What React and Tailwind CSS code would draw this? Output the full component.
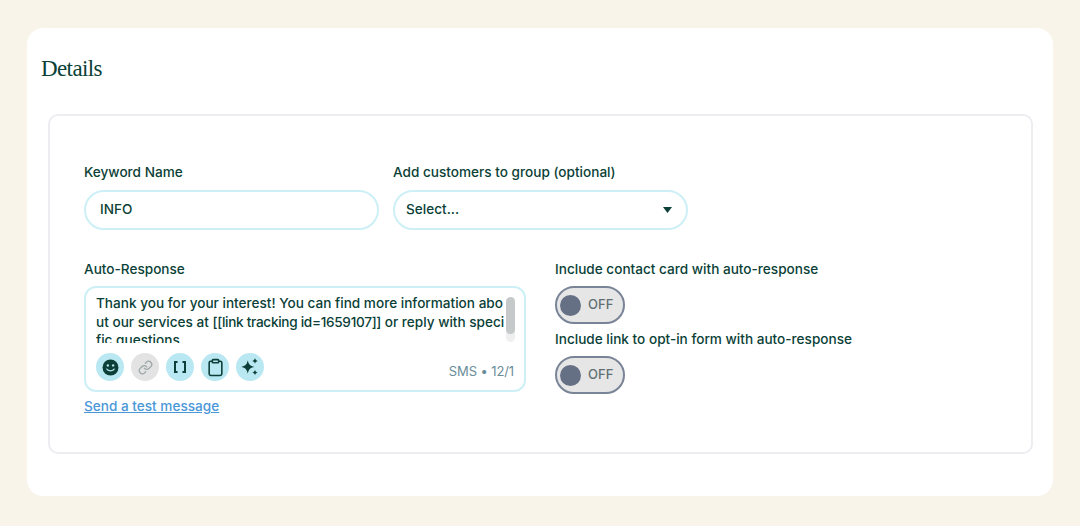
import React from 'react';
import { Link, Clipboard } from 'lucide-react';

const sans = "font-['Inter','Noto_Sans',sans-serif]";

const Toggle = () => (
  <div className="w-[70px] h-[38px] rounded-full bg-[#e6e6e6] border-2 border-[#7a8497] flex items-center pl-[3px] gap-[7px]">
    <div className="w-[21px] h-[21px] rounded-full bg-[#667085]" />
    <span className="text-[13px] font-medium text-[#5f6f73]">OFF</span>
  </div>
);

const ToolButton = ({ gray, children }) => (
  <div className={`w-[28px] h-[28px] rounded-full flex items-center justify-center ${gray ? 'bg-[#e3e3e3]' : 'bg-[#b9e8f3]'}`}>
    {children}
  </div>
);

export default function App() {
  return (
    <div className={`w-[1080px] h-[526px] bg-[#f8f4ea] pt-[28px] px-[27px] overflow-hidden text-[#0b3f37] ${sans}`}>
      <div className="w-[1026px] h-[468px] bg-white rounded-[16px] pt-[27px]">
        <h2 className="ml-[14px] h-[28px] text-[23px] leading-[28px] tracking-[-0.6px] font-['Liberation_Serif',serif] text-[#0b3f37]">Details</h2>

        <div className="ml-[21px] mt-[31px] w-[985px] h-[340px] border-2 border-[#ecedf1] rounded-[10px] pt-[46px] pl-[34px]">
          {/* Top row */}
          <div className="flex gap-[14px]">
            <div className="w-[295px]">
              <label className="block text-[13.600px] leading-[20px] font-medium mb-[8px]">Keyword Name</label>
              <div className="h-[40px] rounded-full border-2 border-[#cdf0f7] flex items-center pl-[14px] pb-[2px] text-[13.600px] font-medium">INFO</div>
            </div>
            <div className="w-[295px]">
              <label className="block text-[13.600px] leading-[20px] font-medium mb-[8px]">Add customers to group (optional)</label>
              <div className="h-[40px] rounded-full border-2 border-[#cdf0f7] flex items-center justify-between pl-[11px] pr-[14px] text-[13.600px] font-medium">
                <span className="mb-[2px]">Select...</span>
                <svg width="9" height="6" viewBox="0 0 9 6"><path d="M0 0h9L4.500 6z" fill="#0b3f37" /></svg>
              </div>
            </div>
          </div>

          {/* Bottom row */}
          <div className="flex gap-[29px] mt-[29px]">
            <div className="w-[442px]">
              <label className="block text-[13.600px] leading-[20px] font-medium mb-[7px]">Auto-Response</label>
              <div className="h-[106px] rounded-[12px] border-2 border-[#cdf0f7] pl-[10px] pr-[9px] pt-[6px]">
                <div className="flex h-[49px] gap-[1px]">
                  <div className="w-[409px] h-[49px] overflow-hidden text-[13.600px] leading-[18.500px] font-medium break-all">
                    Thank you for your interest! You can find more information about our services at <span className="tracking-[-0.3px]">[[link tracking id=1659107]]</span> or reply with specific questions
                  </div>
                  <div className="w-[9px] h-[45px] mt-[3px] rounded-full bg-[#efefef]">
                    <div className="h-[37px] rounded-full bg-[#c6c9c9]" />
                  </div>
                </div>
                <div className="flex items-center justify-between mt-[10px] h-[28px]">
                  <div className="flex gap-[7px]">
                    <ToolButton>
                      <svg width="17" height="17" viewBox="0 0 16 16">
                        <circle cx="8" cy="8" r="7.500" fill="#0b3f37" />
                        <circle cx="5.500" cy="6" r="1.100" fill="#b9e8f3" />
                        <circle cx="10.500" cy="6" r="1.100" fill="#b9e8f3" />
                        <path d="M4.500 9.500c1 2.200 6 2.200 7 0" fill="none" stroke="#b9e8f3" strokeWidth="1.200" strokeLinecap="round" />
                      </svg>
                    </ToolButton>
                    <ToolButton gray>
                      <Link size={15} strokeWidth={2} className="text-[#9aa5a5]" />
                    </ToolButton>
                    <ToolButton>
                      <svg width="14" height="14" viewBox="0 0 14 14" fill="none" stroke="#0b3f37" strokeWidth="2">
                        <path d="M4.500 2H2v10h2.500M9.500 2H12v10H9.500" />
                      </svg>
                    </ToolButton>
                    <ToolButton>
                      <Clipboard size={19} strokeWidth={2} className="text-[#0b3f37]" />
                    </ToolButton>
                    <ToolButton>
                      <svg width="20" height="20" viewBox="0 0 18 18" fill="#0b3f37">
                        <path d="M7 3c.8 3.900 2.100 5.200 6 6-3.900.8-5.200 2.100-6 6-.8-3.900-2.100-5.200-6-6 3.900-.8 5.200-2.100 6-6z" />
                        <path d="M13.500 1c.3 1.500.9 2.100 2.500 2.500-1.600.4-2.200 1-2.500 2.500-.3-1.500-.9-2.100-2.500-2.500 1.600-.4 2.200-1 2.500-2.500z" />
                        <path d="M13.500 11.500c.3 1.500.9 2.100 2.500 2.500-1.600.4-2.200 1-2.500 2.500-.3-1.500-.9-2.100-2.500-2.500 1.600-.4 2.200-1 2.500-2.500z" />
                      </svg>
                    </ToolButton>
                  </div>
                  <span className="text-[13px] tracking-[-0.1px] text-[#6a8d9a] mt-[9px] mr-[1px]">SMS • 12/1</span>
                </div>
              </div>
              <a className="block mt-[5px] text-[13.600px] leading-[18px] font-medium text-[#4a97d8] underline">Send a test message</a>
            </div>

            <div>
              <p className="text-[13.600px] leading-[20px] font-medium mb-[7px]">Include contact card with auto-response</p>
              <Toggle />
              <p className="text-[13.600px] leading-[20px] font-medium mt-[5px] mb-[7px]">Include link to opt-in form with auto-response</p>
              <Toggle />
            </div>
          </div>
        </div>
      </div>
    </div>
  );
}
